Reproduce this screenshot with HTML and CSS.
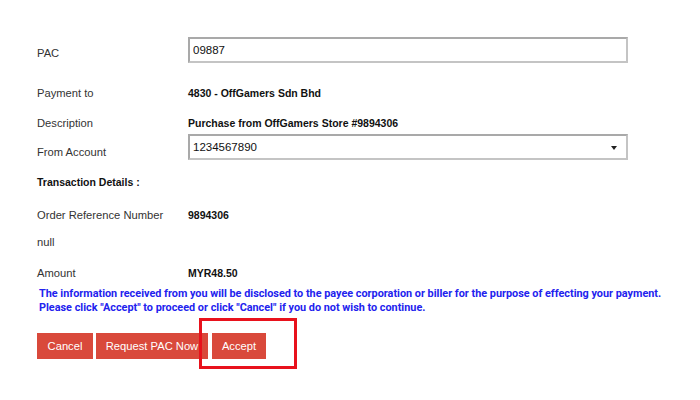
FILE: index.html
```html
<!DOCTYPE html>
<html>
<head>
<meta charset="utf-8">
<link rel="stylesheet" href="styles.css">
</head>
<body>
<div class="page">
  <div class="row row-pac">
    <div class="label lbl-pac">PAC</div>
    <input class="field" type="text" value="09887">
  </div>
  <div class="row row-pay">
    <div class="label">Payment to</div>
    <div class="value">4830 - OffGamers Sdn Bhd</div>
  </div>
  <div class="row row-desc">
    <div class="label">Description</div>
    <div class="value">Purchase from OffGamers Store #9894306</div>
  </div>
  <div class="row row-acct">
    <div class="label lbl-acct">From Account</div>
    <div class="select-wrap">
      <select class="field select"><option>1234567890</option></select>
    </div>
  </div>
  <div class="heading">Transaction Details :</div>
  <div class="row row-ref">
    <div class="label">Order Reference Number</div>
    <div class="value">9894306</div>
  </div>
  <div class="row row-null">
    <div class="label">null</div>
  </div>
  <div class="row row-amt">
    <div class="label">Amount</div>
    <div class="value">MYR48.50</div>
  </div>
  <p class="notice">The information received from you will be disclosed to the payee corporation or biller for the purpose of effecting your payment.<br>Please click "Accept" to proceed or click "Cancel" if you do not wish to continue.</p>
  <div class="actions">
    <button class="btn btn-cancel">Cancel</button>
    <button class="btn btn-pac">Request PAC Now</button>
    <button class="btn btn-accept">Accept</button>
    <div class="highlight"></div>
  </div>
</div>
</body>
</html>
```
FILE: styles.css
```css
html, body {
  margin: 0;
  padding: 0;
  background: #ffffff;
}
body {
  font-family: "Liberation Sans", Arial, sans-serif;
  font-size: 11.2px;
  color: #333333;
}
.page {
  box-sizing: border-box;
  min-height: 400px;
  padding: 37px 0 0 37px;
}
.row {
  display: flex;
  align-items: flex-start;
}
.label {
  width: 151px;
  flex: none;
  line-height: 16px;
}
.value {
  font-weight: bold;
  font-size: 10.5px;
  color: #111111;
  line-height: 16px;
}
.field {
  box-sizing: border-box;
  width: 440px;
  height: 26px;
  margin: 0;
  padding: 0 3px;
  border: 2px solid #a9a9a9;
  border-right-color: #c4c4c4;
  border-bottom-color: #c4c4c4;
  border-radius: 0;
  background: #ffffff;
  font-family: "Liberation Sans", Arial, sans-serif;
  font-size: 11.5px;
  color: #111111;
  outline: none;
}
.lbl-pac {
  padding-top: 8px;
}
.row-pay { margin-top: 22px; }
.row-desc { margin-top: 14px; }
.row-acct { margin-top: 3px; }
.lbl-acct { padding-top: 10px; }
.select-wrap {
  position: relative;
  width: 440px;
}
.select {
  appearance: none;
  -webkit-appearance: none;
  display: block;
}
.select-wrap::after {
  content: "";
  position: absolute;
  right: 11px;
  top: 12px;
  width: 0;
  height: 0;
  border-left: 3px solid transparent;
  border-right: 3px solid transparent;
  border-top: 4px solid #222222;
}
.heading {
  margin-top: 14px;
  font-weight: bold;
  font-size: 10.5px;
  color: #111111;
  line-height: 16px;
}
.row-ref { margin-top: 17px; }
.row-null { margin-top: 11px; }
.row-amt { margin-top: 15px; }
.notice {
  margin: 6px 0 0 2px;
  font-family: Roboto, "Liberation Sans", Arial, sans-serif;
  font-weight: bold;
  font-size: 10.85px;
  line-height: 14px;
  color: #2222ee;
}
.actions {
  position: relative;
  display: flex;
  margin-top: 18px;
}
.btn {
  box-sizing: border-box;
  height: 26px;
  margin: 0;
  padding: 0;
  border: none;
  background: #d9493b;
  color: #ffffff;
  font-family: "Liberation Sans", Arial, sans-serif;
  font-size: 11.2px;
  cursor: pointer;
}
.btn-cancel { width: 56px; }
.btn-pac { width: 112px; margin-left: 3px; }
.btn-accept { width: 54px; margin-left: 4px; }
.highlight {
  position: absolute;
  left: 162px;
  top: -15px;
  width: 98px;
  height: 51px;
  box-sizing: border-box;
  border: 3px solid #e8121c;
}
```
